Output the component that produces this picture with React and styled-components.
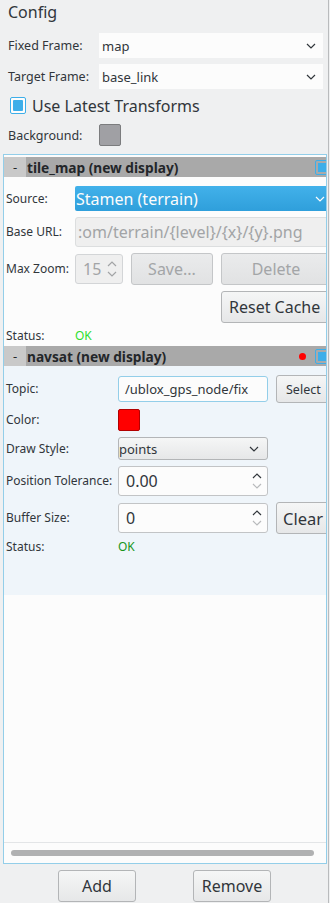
import React from 'react';
import styled, { createGlobalStyle } from 'styled-components';

const GlobalStyle = createGlobalStyle`
  html, body { margin: 0; padding: 0; background: #eff0f1; }
  body { font-family: "Noto Sans", "DejaVu Sans", sans-serif; color: #31363b; }
  * { box-sizing: border-box; }
`;

const Root = styled.div`
  width: 329px;
  height: 903px;
  border-right: 1px solid #b9bbbd;
  padding: 0 1px 0 3px;
  display: flex;
  flex-direction: column;
  overflow: hidden;
`;

const Title = styled.div`
  height: 25px;
  padding-left: 5px;
  font-size: 16px;
  line-height: 24px;
  color: #31363b;
`;

const TopRow = styled.div`
  display: flex;
  align-items: center;
  margin-top: ${p => p.$mt}px;
  padding-left: ${p => p.$pl ?? 5}px;
  height: ${p => p.$h}px;
`;

const TopLabel = styled.span`
  width: 91px;
  flex-shrink: 0;
  font-size: 12.5px;
  color: #31363b;
`;

const FlatCombo = styled.div`
  width: 224px;
  height: 25px;
  background: #fcfcfc;
  display: flex;
  align-items: center;
  justify-content: space-between;
  padding: 0 7px 0 3px;
  font-size: 13px;
  color: #31363b;
`;

const CheckBox = styled.span`
  width: 16px;
  height: 17px;
  border: 1px solid #3daee9;
  border-radius: 2px;
  background: #fcfcfc;
  padding: 2px;
  display: inline-flex;
  flex-shrink: 0;
  &::after {
    content: "";
    flex: 1;
    background: #3daee9;
    border-radius: 1px;
  }
`;

const CheckText = styled.span`
  margin-left: 6px;
  font-size: 16px;
  color: #31363b;
`;

const Swatch = styled.span`
  width: 22px;
  height: 22px;
  border-radius: 2px;
  border: 1px solid ${p => p.$border};
  background: ${p => p.$color};
  display: inline-block;
  flex-shrink: 0;
`;

const Frame = styled.div`
  margin-top: 8px;
  flex: 1;
  border: 1px solid #93cee9;
  background: #fcfcfc;
  display: flex;
  flex-direction: column;
  overflow: hidden;
`;

const Viewport = styled.div`
  flex: 1;
  overflow: hidden;
  padding-top: 2px;
`;

const Panel = styled.div`
  width: 332px;
  background: ${p => p.$bg};
  margin-bottom: ${p => p.$mb || 0}px;
`;

const Header = styled.div`
  height: 20px;
  display: flex;
  align-items: center;
  background: #a9a9a9;
  padding-right: 5px;
`;

const Minus = styled.span`
  width: 22px;
  height: 100%;
  background: #c9c9c9;
  display: flex;
  align-items: center;
  justify-content: center;
  font-size: 13px;
  color: #232629;
`;

const HeaderTitle = styled.span`
  flex: 1;
  padding-left: 1px;
  font-size: 13.7px;
  font-weight: bold;
  color: #232629;
`;

const Dot = styled.span`
  width: 7px;
  height: 7px;
  border-radius: 50%;
  background: #ff0000;
  margin-right: 9px;
`;

const HeaderCheck = styled.span`
  width: 16px;
  height: 15px;
  border: 1px solid #3daee9;
  border-radius: 2px;
  background: #a9a9a9;
  padding: 2px;
  display: inline-flex;
  &::after {
    content: "";
    flex: 1;
    background: #3daee9;
  }
`;

const Body = styled.div`
  display: grid;
  grid-template-columns: ${p => p.$col}px auto;
  row-gap: 6px;
  padding: ${p => p.$pt}px 0 ${p => p.$pb}px 2px;
  align-items: center;
  justify-items: start;
`;

const Label = styled.span`
  font-size: 12px;
  line-height: 14px;
  color: #31363b;
`;

const Controls = styled.div`
  display: flex;
  align-items: center;
  gap: 8px;
  padding-left: ${p => p.$pl || 0}px;
`;

const BlueCombo = styled.div`
  width: 270px;
  height: 25px;
  border-radius: 2px;
  background: linear-gradient(#42b1ea, #2f9fdb);
  color: #fcfcfc;
  font-size: 16px;
  display: flex;
  align-items: center;
  justify-content: space-between;
  padding: 0 20px 0 1px;
`;

const TextInput = styled.div`
  width: ${p => p.$w}px;
  height: ${p => p.$h}px;
  border: 1px solid ${p => p.$border};
  border-radius: 3px;
  background: ${p => p.$bg};
  color: ${p => p.$color};
  font-size: ${p => p.$fs}px;
  display: flex;
  align-items: center;
  padding-left: ${p => p.$pl}px;
  white-space: nowrap;
  overflow: hidden;
`;

const SpinBox = styled.div`
  width: ${p => p.$w}px;
  height: ${p => p.$h}px;
  border: 1px solid ${p => (p.$disabled ? '#d3d5d7' : '#c2c4c6')};
  border-radius: 3px;
  background: ${p => (p.$disabled ? '#efefef' : '#fcfcfc')};
  color: ${p => (p.$disabled ? '#a2a4a6' : '#31363b')};
  font-size: 16px;
  display: flex;
  align-items: center;
  justify-content: space-between;
  padding: 0 5px 0 ${p => p.$pl}px;
`;

const Arrows = styled.span`
  display: flex;
  flex-direction: column;
  gap: 4px;
`;

const Button = styled.button`
  width: ${p => p.$w}px;
  height: ${p => p.$h}px;
  flex-shrink: 0;
  border: 1px solid ${p => (p.disabled ? '#c4c6c8' : '#b3b5b7')};
  border-radius: 3px;
  background: ${p => (p.disabled ? 'linear-gradient(#eaebec, #e1e2e3)' : 'linear-gradient(#f5f6f6, #e6e7e8)')};
  color: ${p => (p.disabled ? '#a3a5a7' : '#31363b')};
  font-family: inherit;
  font-size: ${p => p.$fs}px;
  padding: 0;
  text-align: ${p => p.$align || 'center'};
  padding-left: ${p => p.$pl || 0}px;
`;

const GrayCombo = styled.div`
  width: 150px;
  height: 23px;
  border: 1px solid #b3b5b7;
  border-radius: 3px;
  background: linear-gradient(#f5f6f6, #e6e7e8);
  font-size: 13px;
  color: #31363b;
  display: flex;
  align-items: center;
  justify-content: space-between;
  padding: 0 8px 0 0;
`;

const Status = styled.span`
  font-size: 12px;
  line-height: 14px;
  color: ${p => p.$color};
`;

const ScrollArea = styled.div`
  height: 21px;
  border-top: 1px solid #e3e5e7;
  padding: 7px 12px 0 7px;
`;

const ScrollThumb = styled.div`
  height: 6px;
  border-radius: 3px;
  background: #b0b1b2;
`;

const BottomBar = styled.div`
  height: 39px;
  display: flex;
  align-items: flex-start;
  padding: 6px 0 0 55px;
  gap: 57px;
`;

const Chevron = ({ color = '#31363b', w = 10, h = 6, flip }) => (
  <svg width={w} height={h} viewBox="0 0 10 6" style={{ display: 'block' }}>
    <polyline
      points={flip ? '1,5 5,1 9,5' : '1,1 5,5 9,1'}
      fill="none"
      stroke={color}
      strokeWidth="1.2"
    />
  </svg>
);

const SpinArrows = ({ up, down }) => (
  <Arrows>
    <Chevron flip color={up} w={10} h={6} />
    <Chevron color={down} w={10} h={6} />
  </Arrows>
);

export default function App() {
  return (
    <>
      <GlobalStyle />
      <Root>
        <Title>Config</Title>
        <TopRow $mt={8} $h={25}>
          <TopLabel>Fixed Frame:</TopLabel>
          <FlatCombo>map<Chevron /></FlatCombo>
        </TopRow>
        <TopRow $mt={6} $h={25}>
          <TopLabel>Target Frame:</TopLabel>
          <FlatCombo>base_link<Chevron /></FlatCombo>
        </TopRow>
        <TopRow $mt={8} $h={17} $pl={7}>
          <CheckBox />
          <CheckText>Use Latest Transforms</CheckText>
        </TopRow>
        <TopRow $mt={10} $h={22}>
          <TopLabel>Background:</TopLabel>
          <Swatch $color="#a0a0a4" $border="#7b7c7e" />
        </TopRow>
        <Frame>
          <Viewport>
            <Panel $bg="#fcfcfc" $mb={2}>
              <Header>
                <Minus>-</Minus>
                <HeaderTitle>tile_map (new display)</HeaderTitle>
                <HeaderCheck />
              </Header>
              <Body $col={69} $pt={9} $pb={1}>
                <Label>Source:</Label>
                <BlueCombo>Stamen (terrain)<Chevron color="#fcfcfc" /></BlueCombo>
                <Label>Base URL:</Label>
                <TextInput $w={270} $h={30} $border="#dcdedf" $bg="#efefef" $color="#a2a4a6" $fs={16} $pl={2}>
                  :om/terrain/{'{level}'}/{'{x}'}/{'{y}'}.png
                </TextInput>
                <Label>Max Zoom:</Label>
                <Controls>
                  <SpinBox $w={48} $h={30} $pl={7} $disabled>
                    15
                    <SpinArrows up="#a2a4a6" down="#a2a4a6" />
                  </SpinBox>
                  <Button disabled $w={82} $h={32} $fs={16}>Save...</Button>
                  <Button disabled $w={110} $h={32} $fs={16}>Delete</Button>
                </Controls>
                <span />
                <Controls $pl={146}>
                  <Button $w={110} $h={32} $fs={16} $align="left" $pl={7}>Reset Cache</Button>
                </Controls>
                <Label>Status:</Label>
                <Status $color="#2ee02e">OK</Status>
              </Body>
            </Panel>
            <Panel $bg="#eff5fa">
              <Header>
                <Minus>-</Minus>
                <HeaderTitle>navsat (new display)</HeaderTitle>
                <Dot />
                <HeaderCheck />
              </Header>
              <Body $col={112} $pt={9} $pb={41}>
                <Label>Topic:</Label>
                <Controls>
                  <TextInput $w={150} $h={26} $border="#93cee9" $bg="#fcfcfc" $color="#31363b" $fs={13} $pl={6}>
                    /ublox_gps_node/fix
                  </TextInput>
                  <Button $w={60} $h={28} $fs={12.5} $align="left" $pl={9}>Select</Button>
                </Controls>
                <Label>Color:</Label>
                <Swatch $color="#ff0000" $border="#b20000" />
                <Label>Draw Style:</Label>
                <GrayCombo>points<Chevron /></GrayCombo>
                <Label>Position Tolerance:</Label>
                <SpinBox $w={150} $h={30} $pl={7}>
                  0.00
                  <SpinArrows up="#31363b" down="#b8babc" />
                </SpinBox>
                <Label>Buffer Size:</Label>
                <Controls>
                  <SpinBox $w={150} $h={30} $pl={7}>
                    0
                    <SpinArrows up="#31363b" down="#b8babc" />
                  </SpinBox>
                  <Button $w={60} $h={32} $fs={16.5} $align="left" $pl={6}>Clear</Button>
                </Controls>
                <Label>Status:</Label>
                <Status $color="#18951c">OK</Status>
              </Body>
            </Panel>
          </Viewport>
          <ScrollArea>
            <ScrollThumb />
          </ScrollArea>
        </Frame>
        <BottomBar>
          <Button $w={78} $h={32} $fs={16}>Add</Button>
          <Button $w={78} $h={32} $fs={16}>Remove</Button>
        </BottomBar>
      </Root>
    </>
  );
}
